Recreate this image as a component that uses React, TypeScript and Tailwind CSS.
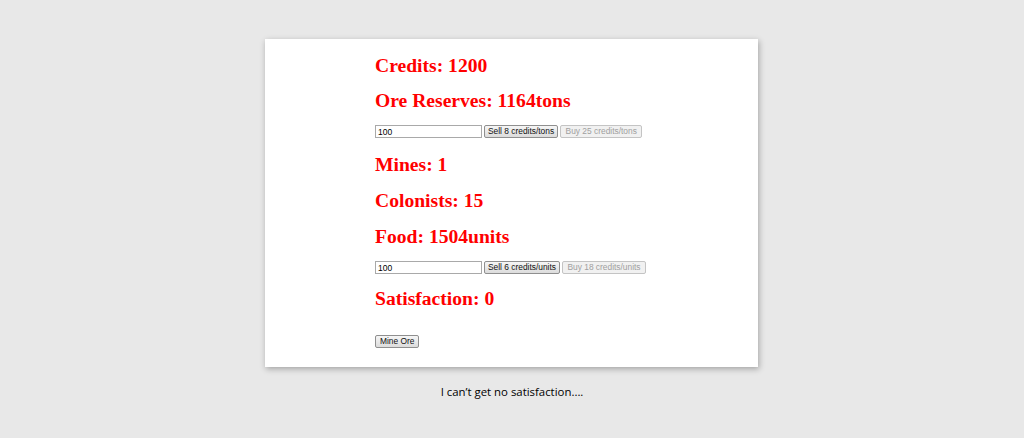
import React from 'react';

const heading = "text-[19.6px] leading-[24px] font-bold text-[#ff0000] [font-family:'Liberation_Serif',serif]";
const field = "h-[13px] w-[107px] border border-[#a9a9a9] bg-white px-[2px] text-[8.5px] leading-[11px] text-black [font-family:'Liberation_Sans',Arial,sans-serif]";
const btn = "h-[13px] border border-[#8f8f8f] rounded-[2px] bg-gradient-to-b from-[#f6f6f6] to-[#dcdcdc] px-[3px] text-[8.4px] leading-[11px] text-[#111] [font-family:'Liberation_Sans',Arial,sans-serif]";
const btnOff = "h-[13px] border border-[#c4c4c4] rounded-[2px] bg-[#f1f1f1] px-[4.5px] text-[8.4px] leading-[11px] text-[#a0a0a0] [font-family:'Liberation_Sans',Arial,sans-serif]";

function TradeRow({ sell, buy }: { sell: string; buy: string }) {
  return (
    <div className="flex items-center gap-[2px]">
      <input className={field} defaultValue="100" />
      <button className={btn}>{sell}</button>
      <button className={btnOff} disabled>{buy}</button>
    </div>
  );
}

export default function App() {
  return (
    <div className="h-[438px] w-full bg-[#e8e8e8] pt-[39px]">
      <div className="ml-[265px] w-[493px] h-[328px] bg-white shadow-[1px_2px_6px_rgba(0,0,0,0.3)] pl-[110px] pt-[15px] flex flex-col">
        <h2 className={heading}>Credits: 1200</h2>
        <h2 className={`${heading} mt-[11px]`}>Ore Reserves: 1164tons</h2>
        <div className="mt-[12px]">
          <TradeRow sell="Sell 8 credits/tons" buy="Buy 25 credits/tons" />
        </div>
        <h2 className={`${heading} mt-[15px]`}>Mines: 1</h2>
        <h2 className={`${heading} mt-[12px]`}>Colonists: 15</h2>
        <h2 className={`${heading} mt-[12px]`}>Food: 1504units</h2>
        <div className="mt-[12px]">
          <TradeRow sell="Sell 6 credits/units" buy="Buy 18 credits/units" />
        </div>
        <h2 className={`${heading} mt-[13px]`}>Satisfaction: 0</h2>
        <div className="mt-[24px] flex">
          <button className={`${btn} px-[4px]`}>Mine Ore</button>
        </div>
      </div>
      <p className="mt-[17px] text-center text-[11.4px] leading-[16px] text-black [font-family:'Open_Sans',sans-serif]">
        I can’t get no satisfaction....
      </p>
    </div>
  );
}
